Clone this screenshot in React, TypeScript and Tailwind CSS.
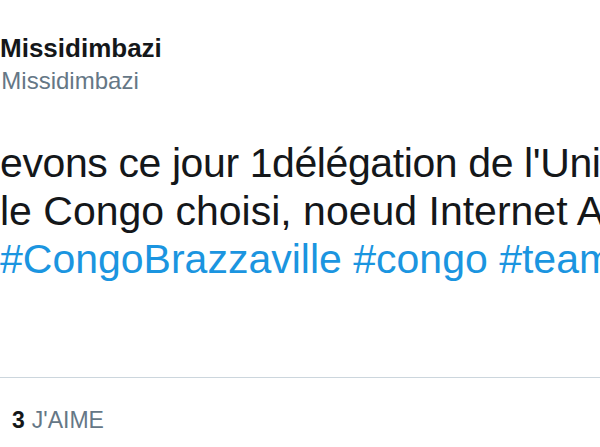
export default function App() {
  return (
    <div
      className="w-[600px] h-[447px] overflow-hidden bg-white flex flex-col"
      style={{ fontFamily: '"Liberation Sans", Arial, sans-serif' }}
    >
      <div className="pt-[33px] flex flex-col">
        <div className="text-[26px] leading-[30px] font-bold text-[#14171a] whitespace-nowrap">Missidimbazi</div>
        <div className="mt-[3px] text-[24px] leading-[30px] text-[#657786] whitespace-nowrap ml-[-23px]">@Missidimbazi</div>
      </div>
      <div className="mt-[43px] flex flex-col text-[41px] leading-[48px] text-[#14171a] whitespace-nowrap">
        <div className="tracking-[-0.4px]">evons ce jour 1délégation de l'Union</div>
        <div>le Congo choisi, noeud Internet Afrique</div>
        <div className="text-[#1b95e0]">#CongoBrazzaville #congo #team</div>
      </div>
      <div className="mt-[94px] h-px bg-[#ccd6dd] w-full" />
      <div className="mt-[29px] pl-[12px] text-[23px] leading-[26px] whitespace-nowrap flex gap-[7px]">
        <span className="text-[#14171a] font-semibold">3</span>
        <span className="text-[#657786]">J'AIME</span>
      </div>
    </div>
  );
}
